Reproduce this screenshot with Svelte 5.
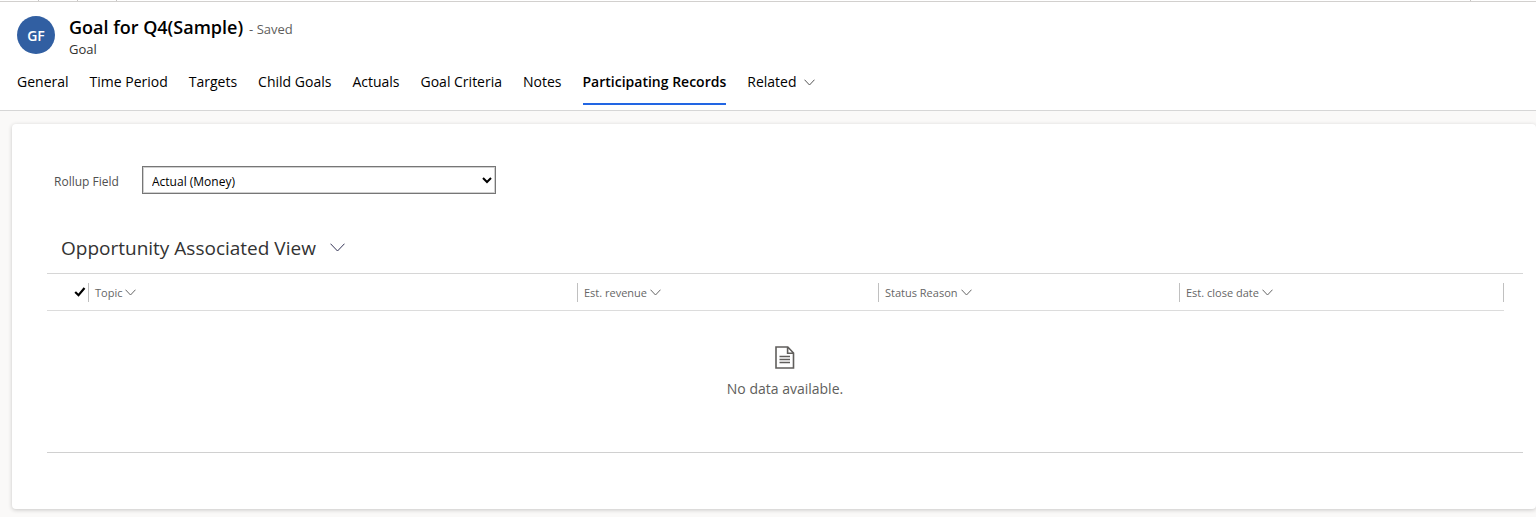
<script>
  const tabs = ['General', 'Time Period', 'Targets', 'Child Goals', 'Actuals', 'Goal Criteria', 'Notes', 'Participating Records'];
  let active = $state('Participating Records');
  let rollup = $state('Actual (Money)');
  const columns = [
    { name: 'Topic', width: '33.56%' },
    { name: 'Est. revenue', width: '20.66%' },
    { name: 'Status Reason', width: '20.66%' },
    { name: 'Est. close date', width: 'auto' }
  ];
</script>

{#snippet chevron(w, h)}
  <svg class="chevron" width={w} height={h} viewBox="0 0 {w} {h}" aria-hidden="true">
    <path d="M.5 .7 L{w / 2} {h - 1} L{w - 0.5} .7" fill="none" stroke="currentColor" />
  </svg>
{/snippet}

<div class="page">
  <div class="strip"><i></i><i></i><i></i><i class="wide"></i></div>
  <header>
    <div class="record">
      <div class="avatar">GF</div>
      <div>
        <div class="title">
          <h1>Goal for Q4(Sample)</h1>
          <span class="saved">- Saved</span>
        </div>
        <div class="entity">Goal</div>
      </div>
    </div>
    <nav>
      {#each tabs as tab}
        <button class="tab" class:active={active === tab} onclick={() => (active = tab)}>{tab}</button>
      {/each}
      <button class="tab related">Related {@render chevron(11, 7)}</button>
    </nav>
  </header>

  <main>
    <section class="card">
      <div class="field">
        <label for="rollup">Rollup Field</label>
        <select id="rollup" bind:value={rollup}>
          <option>Actual (Money)</option>
        </select>
      </div>

      <button class="view">Opportunity Associated View {@render chevron(15, 9)}</button>

      <div class="grid">
        <table>
          <thead>
            <tr>
              <th class="check">
                <button aria-label="Select all">
                  <svg width="12" height="10" viewBox="0 0 12 10" aria-hidden="true">
                    <path d="M1.2 5 L4.5 8.2 L10.5 1" fill="none" stroke="#000" stroke-width="2.2" />
                  </svg>
                </button>
              </th>
              {#each columns as column}
                <th style:width={column.width}>
                  <button>{column.name} {@render chevron(11, 7)}</button>
                </th>
              {/each}
            </tr>
          </thead>
        </table>
        <div class="empty">
          <svg width="20" height="23" viewBox="0 0 20 23" aria-hidden="true">
            <path d="M1 1 H12.8 L18.5 7 V22 H1 Z M12.6 1 V7.2 H18.5" fill="none" stroke="#605e5c" stroke-width="1.6" />
            <path d="M4.5 10.5 H15 M4.5 13.5 H15 M4.5 16.5 H15" stroke="#605e5c" stroke-width="1.4" />
          </svg>
          <p>No data available.</p>
        </div>
      </div>
    </section>
  </main>
</div>

<style>
  :global(body) { margin: 0; background: #faf9f8; }
  .page { font-family: "Open Sans", "Noto Sans", sans-serif; color: #000; overflow-x: hidden; }
  button { font: inherit; color: inherit; background: none; border: 0; padding: 0; cursor: pointer; }
  .chevron { flex: none; }

  .strip { display: flex; height: 1px; background: #fff; border-bottom: 1px solid #d2d0ce; }
  .strip i { box-sizing: border-box; width: 39px; border-right: 1px solid #c8c6c4; }
  .strip .wide { flex: 1; margin-right: 65px; }

  header { background: #fff; border-bottom: 1px solid #d6d6d6; padding: 14px 17px 5px; }
  .record { display: flex; gap: 14px; }
  .avatar {
    width: 38px; height: 38px; border-radius: 50%; background: #315fa2; color: #fff;
    font-size: 14px; font-weight: 600; line-height: 39px; text-align: center;
  }
  .title { display: flex; align-items: baseline; gap: 6px; line-height: 22px; }
  h1 { margin: 0; font-size: 18px; font-weight: 600; }
  .saved { font-size: 13px; color: #605e5c; }
  .entity { font-size: 13px; font-weight: 500; line-height: 18px; color: #323130; }
  nav { display: flex; gap: 21px; margin-top: 10px; }
  .tab { padding-bottom: 7px; font-size: 14px; line-height: 28px; border-bottom: 2px solid transparent; white-space: nowrap; }
  .tab.active { font-weight: 600; border-color: #2266e3; }
  .related { display: flex; align-items: center; gap: 8px; }
  .related :global(svg) { color: #555; }

  main { padding: 13px 0 8px 12px; }
  .card {
    background: #fff; border-radius: 4px; padding: 42px 13px 56px 35px;
    box-shadow: 0 1px 4px rgba(0, 0, 0, 0.2);
  }
  .field { display: flex; align-items: center; padding-left: 7px; font-size: 12px; }
  label { width: 88px; padding-top: 2px; color: #505050; }
  select {
    box-sizing: border-box; width: 354px; height: 28px; padding: 2px 3px 0 5px; border: 1px solid #767676;
    border-radius: 0; box-shadow: inset 0 0 0 1px #d0d0d0; background: #fff; color: #000;
    font-family: inherit; font-size: 12px;
  }
  .view {
    display: flex; align-items: center; gap: 14px; margin: 38px 0 9px 14px;
    font-size: 19px; line-height: 32px; color: #333;
  }
  .view :global(svg) { color: #335; margin-bottom: 2px; }

  .grid { border-top: 1px solid #d6d6d6; border-bottom: 1px solid #d0d0d0; }
  table { width: calc(100% - 19px); table-layout: fixed; border-collapse: collapse; }
  th { height: 36px; padding: 0; border-bottom: 1px solid #dcdcdc; font-weight: 400; text-align: left; }
  .check { width: 41px; }
  th button { display: flex; align-items: center; gap: 3px; box-sizing: border-box; width: 100%; height: 19px; padding-left: 6px; border-left: 1px solid #c0c0c0; font-size: 11px; line-height: 17px; color: #666; }
  th:last-child button { border-right: 1px solid #c0c0c0; }
  .check button { border-left: 0; padding-left: 27px; }
  .empty { display: flex; flex-direction: column; align-items: center; padding: 35px 0 51px; color: #605e5c; }
  .empty p { margin: 7px 0 0; font-size: 14px; line-height: 25px; }
</style>
